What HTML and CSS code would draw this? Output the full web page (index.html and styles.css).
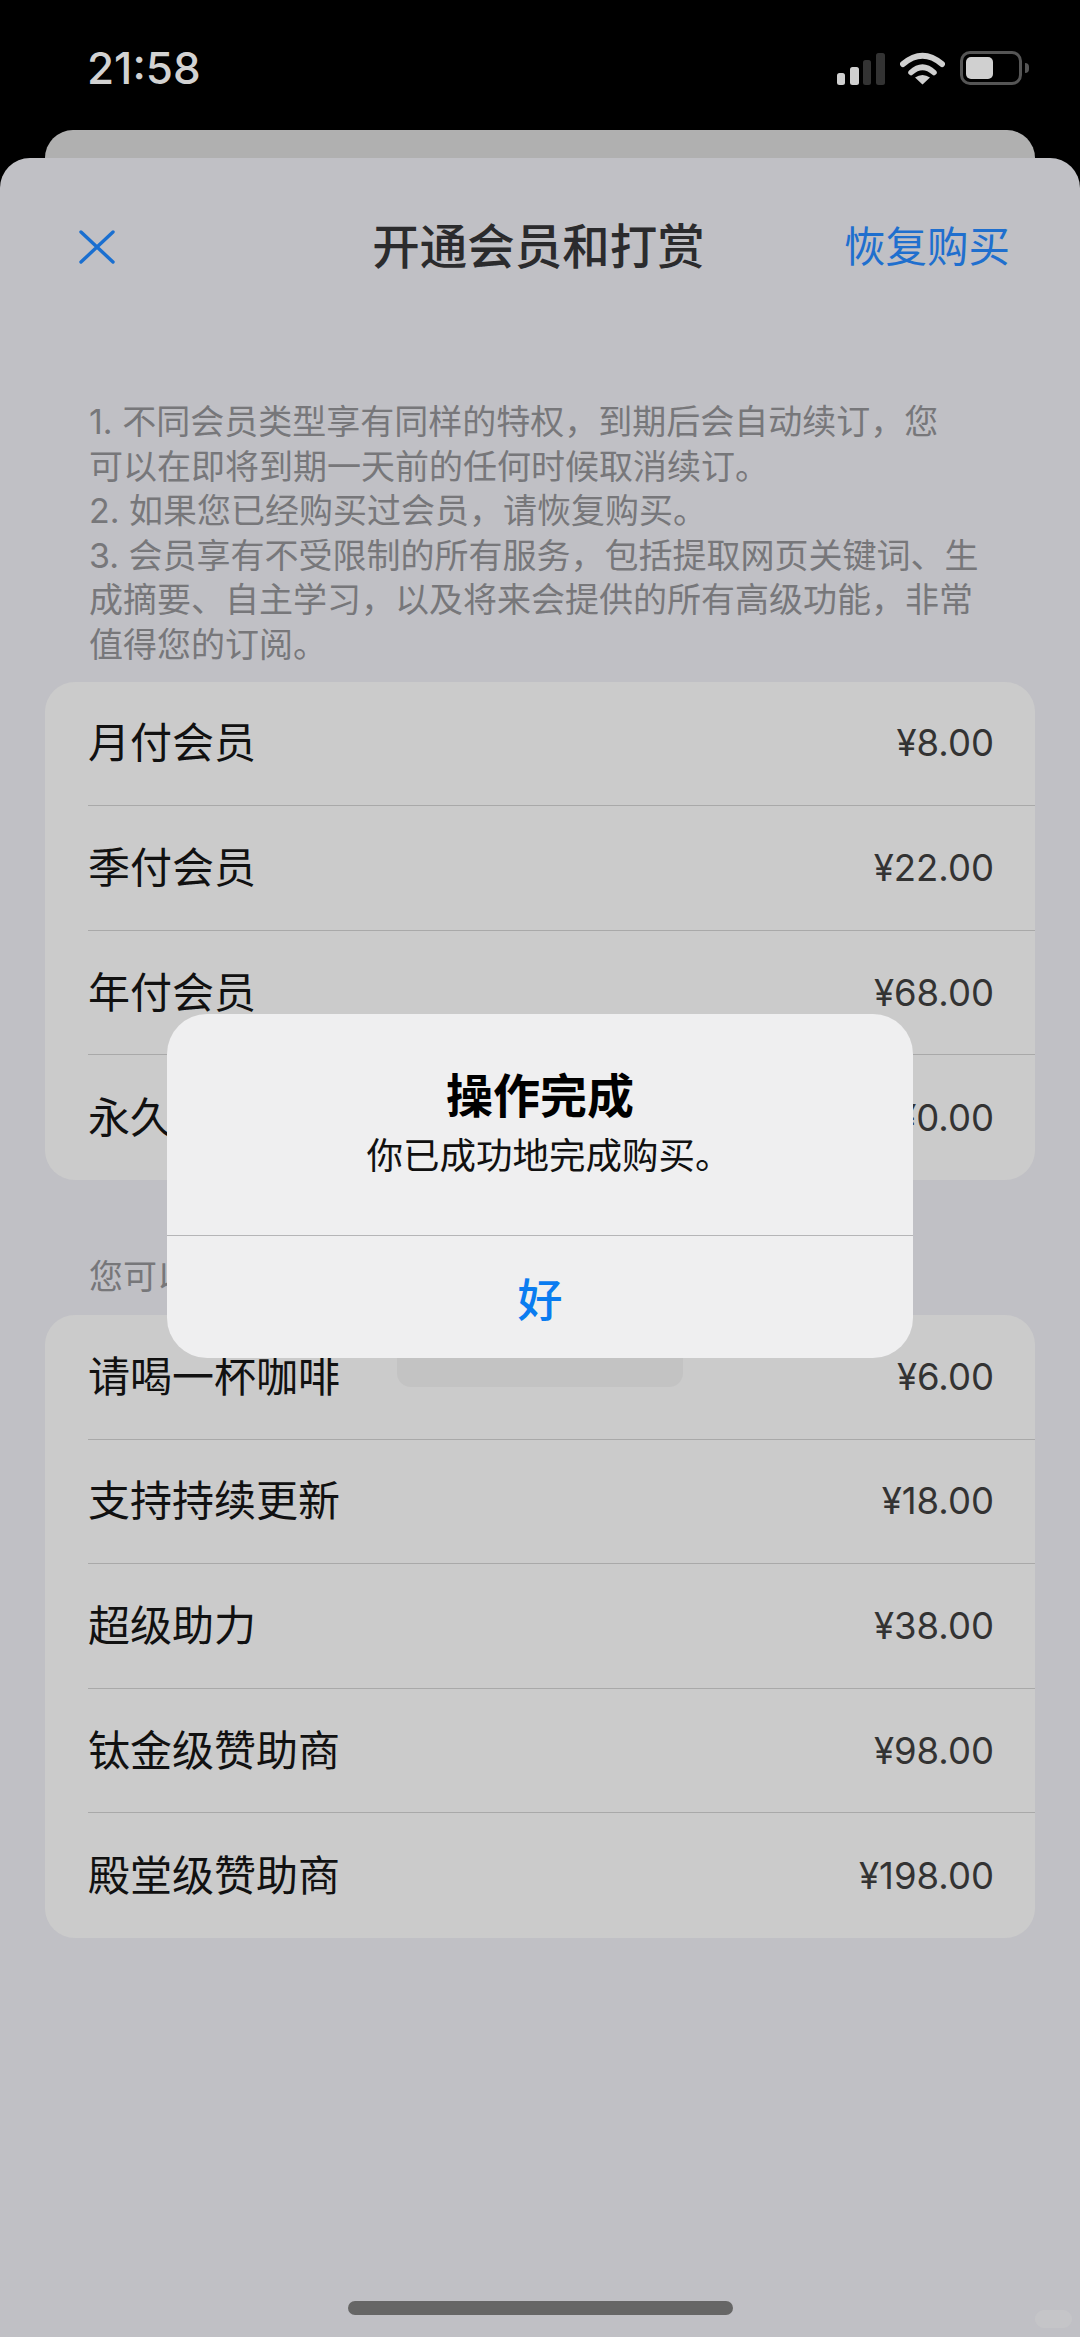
FILE: index.html
```html
<!DOCTYPE html>
<html lang="zh-CN">
<head>
<meta charset="utf-8">
<title>开通会员和打赏</title>
<link rel="stylesheet" href="styles.css">
</head>
<body>
<div class="screen">
  <header class="statusbar">
    <span class="time">21:58</span>
    <div class="status-icons">
      <svg class="signal" width="48" height="32" viewBox="0 0 48 32">
        <rect x="0" y="20" width="8" height="12" rx="2.5" fill="#d0d0d0"/>
        <rect x="13" y="14" width="9" height="18" rx="2.5" fill="#d0d0d0"/>
        <rect x="26" y="7" width="8" height="25" rx="2.5" fill="#333"/>
        <rect x="39" y="0" width="9" height="32" rx="2.5" fill="#333"/>
      </svg>
      <svg class="wifi" width="45" height="34" viewBox="0 0 45 34">
        <path d="M3 13 Q22.5 -3.5 42 13" fill="none" stroke="#d0d0d0" stroke-width="6" stroke-linecap="round"/>
        <path d="M11 21.5 Q22.5 11 34 21.5" fill="none" stroke="#d0d0d0" stroke-width="5.5" stroke-linecap="round"/>
        <path d="M22.5 33.5 L15 26.5 Q22.5 21.5 30 26.5 Z" fill="#d0d0d0"/>
      </svg>
      <div class="battery">
        <div class="battery-shell"><div class="battery-level"></div></div>
        <div class="battery-nub"></div>
      </div>
    </div>
  </header>
  <div class="back-card"></div>
  <main class="sheet">
    <nav class="nav">
      <svg class="close" width="36" height="34" viewBox="0 0 36 34">
        <path d="M2 2 L34 32 M34 2 L2 32" fill="none" stroke="#1a6fd0" stroke-width="3.4" stroke-linecap="round"/>
      </svg>
      <h1 class="nav-title">开通会员和打赏</h1>
      <span class="nav-action">恢复购买</span>
    </nav>
    <p class="notes">1. 不同会员类型享有同样的特权，到期后会自动续订，您<br>可以在即将到期一天前的任何时候取消续订。<br>2. 如果您已经购买过会员，请恢复购买。<br>3. 会员享有不受限制的所有服务，包括提取网页关键词、生<br>成摘要、自主学习，以及将来会提供的所有高级功能，非常<br>值得您的订阅。</p>
    <section class="card">
      <div class="row"><span class="row-name">月付会员</span><span class="row-price">¥8.00</span></div>
      <div class="row"><span class="row-name">季付会员</span><span class="row-price">¥22.00</span></div>
      <div class="row"><span class="row-name">年付会员</span><span class="row-price">¥68.00</span></div>
      <div class="row"><span class="row-name">永久会员</span><span class="row-price">¥0.00</span></div>
    </section>
    <p class="section-note">您可以打赏支持开发者</p>
    <section class="card">
      <div class="row"><span class="row-name">请喝一杯咖啡</span><span class="row-price">¥6.00</span></div>
      <div class="row"><span class="row-name">支持持续更新</span><span class="row-price">¥18.00</span></div>
      <div class="row"><span class="row-name">超级助力</span><span class="row-price">¥38.00</span></div>
      <div class="row"><span class="row-name">钛金级赞助商</span><span class="row-price">¥98.00</span></div>
      <div class="row"><span class="row-name">殿堂级赞助商</span><span class="row-price">¥198.00</span></div>
    </section>
    <div class="home-indicator"></div>
  </main>
  <div class="hud"></div>
  <div class="alert">
    <div class="alert-body">
      <h2 class="alert-title">操作完成</h2>
      <p class="alert-message">你已成功地完成购买。</p>
    </div>
    <div class="alert-button">好</div>
  </div>
  <div class="watermark"></div>
</div>
</body>
</html>
```
FILE: styles.css
```css
* { box-sizing: border-box; margin: 0; padding: 0; }
html, body { width: 1080px; height: 2337px; overflow: hidden; background: #000; }
body { font-family: Inter, "Noto Sans CJK SC", sans-serif; }
.screen { position: relative; width: 1080px; height: 2337px; display: flex; flex-direction: column; }

.statusbar { height: 130px; flex: none; display: flex; justify-content: space-between; align-items: flex-start; padding: 0 51px 0 87px; }
.time { margin-top: 41px; font-size: 44px; line-height: 54px; font-weight: 500; color: #d2d2d2; }
.status-icons { margin-top: 51px; display: flex; align-items: flex-start; }
.signal { margin-top: 2px; margin-right: 15px; }
.wifi { margin-right: 15px; }
.battery { display: flex; align-items: center; height: 34px; }
.battery-shell { width: 62px; height: 34px; border: 3px solid #555; border-radius: 10px; padding: 3px; }
.battery-level { width: 27px; height: 22px; background: #d0d0d0; border-radius: 5px; }
.battery-nub { width: 4px; height: 10px; margin-left: 3px; background: #555; border-radius: 0 4px 4px 0; }

.back-card { height: 28px; flex: none; margin: 0 45px; background: #b0b0b0; border-radius: 30px 30px 0 0; }

.sheet { flex: 1; display: flex; flex-direction: column; background: #c0c0c5; border-radius: 30px 30px 0 0; }
.nav { height: 178px; flex: none; display: grid; grid-template-columns: 293fr auto 305fr; align-items: center; padding: 0 70px 0 79px; }
.nav-title { font-size: 47.5px; line-height: 60px; font-weight: 500; color: #2b2b2d; }
.nav-action { justify-self: end; font-size: 41.5px; line-height: 60px; color: #1f6fce; }

.notes { margin: 64px 70px 14px 89px; font-size: 34px; line-height: 44.6px; color: #77777a; white-space: nowrap; }
.card { margin: 0 45px; background: #cbcbcb; border-radius: 30px; flex: none; }
.row { height: 124.6px; margin-left: 43px; padding-right: 41px; display: flex; align-items: center; justify-content: space-between; border-bottom: 1px solid #a9a9a9; }
.row:last-child { border-bottom: 0; }
.row-name { font-size: 42px; line-height: 56px; color: #111; }
.row-price { font-size: 36.5px; line-height: 50px; color: #333; }
.section-note { margin: 75px 89px 16px; font-size: 34px; line-height: 44px; color: #77777a; }

.home-indicator { width: 385px; height: 14px; margin: auto auto 22px; background: #666; border-radius: 7px; }

.hud { position: absolute; left: 397px; top: 1300px; width: 286px; height: 87px; background: #c3c3c3; border-radius: 14px; }
.alert { position: absolute; left: 167px; top: 1014px; width: 746px; height: 344px; background: #efeff0; border-radius: 40px; display: flex; flex-direction: column; }
.alert-body { height: 222px; flex: none; display: flex; flex-direction: column; align-items: center; padding-top: 51px; border-bottom: 1px solid #b5b5b7; }
.alert-title { font-size: 47px; line-height: 62px; font-weight: 700; color: #000; }
.alert-message { margin-top: 6px; padding-left: 18px; font-size: 36.5px; line-height: 46px; color: #111; }
.alert-button { flex: 1; display: flex; align-items: center; justify-content: center; font-size: 45px; font-weight: 500; color: #0a7cf0; }
.watermark { position: absolute; left: 1035px; top: 2310px; width: 37px; height: 18px; background: #c5c5c8; border-radius: 9px; }
```
